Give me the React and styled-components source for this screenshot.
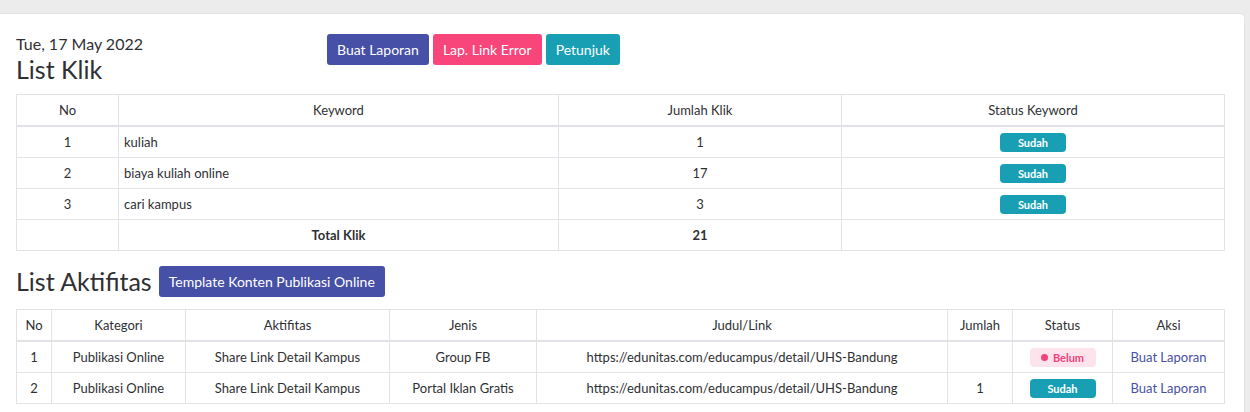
import React from 'react';
import styled, { createGlobalStyle } from 'styled-components';

const GlobalStyle = createGlobalStyle`
    body {
        margin: 0;
        background: #ececec;
        font-family: 'Lato', 'Noto Sans', sans-serif;
        color: #2f3033;
    }
`;

const Card = styled.div`
    margin: 13px 5px 0 0;
    background: #fff;
    border: 1px solid #e2e2e2;
    border-left: none;
    border-radius: 0 5px 0 0;
    padding: 18px 19px 9px 16px;
`;

const Header = styled.div`
    display: flex;
    align-items: flex-start;
`;

const TitleBlock = styled.div`
    width: 311px;
`;

const DateText = styled.div`
    font-size: 16px;
    line-height: 24px;
`;

const Title = styled.h2`
    margin: 0;
    font-size: 25px;
    font-weight: 400;
    line-height: 27px;
`;

const ButtonGroup = styled.div`
    display: flex;
    gap: 4px;
    margin-top: 2px;
`;

const colors = {
    primary: '#4650a6',
    danger: '#f8457a',
    info: '#199fb4',
};

const Button = styled.button`
    font-family: inherit;
    font-size: 14px;
    color: #fff;
    background: ${(p) => colors[p.$variant || 'primary']};
    border: none;
    border-radius: 3px;
    height: 31px;
    padding: 0 10px;
    cursor: pointer;
`;

const Table = styled.table`
    width: 100%;
    border-collapse: collapse;
    table-layout: fixed;
    font-size: 13px;
    margin-top: ${(p) => p.$mt || 0}px;

    th, td {
        border: 1px solid #e1e3e8;
        height: 30px;
        padding: 0 5px;
        text-align: center;
        font-weight: 400;
    }
    thead th {
        border-bottom: 2px solid #e1e3e8;
    }
`;

const LeftCell = styled.td`
    && {
        text-align: left;
    }
`;

const BoldCell = styled.td`
    && {
        font-weight: 700;
    }
`;

const SectionRow = styled.div`
    display: flex;
    align-items: center;
    gap: 7px;
    margin-top: 15px;
`;

const Badge = styled.span`
    display: inline-flex;
    align-items: center;
    justify-content: center;
    gap: 5px;
    width: 66px;
    height: 19px;
    border-radius: 4px;
    font-size: 11px;
    font-weight: 700;
    vertical-align: middle;
    background: ${(p) => (p.$done ? '#199fb4' : '#fde4ec')};
    color: ${(p) => (p.$done ? '#fff' : '#f0437a')};
`;

const Dot = styled.span`
    width: 7px;
    height: 7px;
    border-radius: 50%;
    background: #f0437a;
`;

const ActionLink = styled.a`
    color: #4650a6;
    text-decoration: none;
    font-size: 13px;
`;

const keywords = [
    { no: 1, keyword: 'kuliah', klik: 1 },
    { no: 2, keyword: 'biaya kuliah online', klik: 17 },
    { no: 3, keyword: 'cari kampus', klik: 3 },
];

const aktifitas = [
    { no: 1, jenis: 'Group FB', jumlah: '', done: false },
    { no: 2, jenis: 'Portal Iklan Gratis', jumlah: 1, done: true },
];

function App() {
    return (
        <>
            <GlobalStyle />
            <Card>
                <Header>
                    <TitleBlock>
                        <DateText>Tue, 17 May 2022</DateText>
                        <Title>List Klik</Title>
                    </TitleBlock>
                    <ButtonGroup>
                        <Button $variant='primary'>Buat Laporan</Button>
                        <Button $variant='danger'>Lap. Link Error</Button>
                        <Button $variant='info'>Petunjuk</Button>
                    </ButtonGroup>
                </Header>

                <Table $mt={11}>
                    <colgroup>
                        <col style={{ width: 102 }} />
                        <col style={{ width: 440 }} />
                        <col style={{ width: 283 }} />
                        <col />
                    </colgroup>
                    <thead>
                        <tr>
                            <th>No</th>
                            <th>Keyword</th>
                            <th>Jumlah Klik</th>
                            <th>Status Keyword</th>
                        </tr>
                    </thead>
                    <tbody>
                        {keywords.map((k) => (
                            <tr key={k.no}>
                                <td>{k.no}</td>
                                <LeftCell>{k.keyword}</LeftCell>
                                <td>{k.klik}</td>
                                <td>
                                    <Badge $done>Sudah</Badge>
                                </td>
                            </tr>
                        ))}
                        <tr>
                            <td></td>
                            <BoldCell>Total Klik</BoldCell>
                            <BoldCell>21</BoldCell>
                            <td></td>
                        </tr>
                    </tbody>
                </Table>

                <SectionRow>
                    <Title>List Aktifitas</Title>
                    <Button $variant='primary'>Template Konten Publikasi Online</Button>
                </SectionRow>

                <Table $mt={12}>
                    <colgroup>
                        <col style={{ width: 35 }} />
                        <col style={{ width: 134 }} />
                        <col style={{ width: 204 }} />
                        <col style={{ width: 147 }} />
                        <col style={{ width: 411 }} />
                        <col style={{ width: 65 }} />
                        <col style={{ width: 100 }} />
                        <col />
                    </colgroup>
                    <thead>
                        <tr>
                            <th>No</th>
                            <th>Kategori</th>
                            <th>Aktifitas</th>
                            <th>Jenis</th>
                            <th>Judul/Link</th>
                            <th>Jumlah</th>
                            <th>Status</th>
                            <th>Aksi</th>
                        </tr>
                    </thead>
                    <tbody>
                        {aktifitas.map((a) => (
                            <tr key={a.no}>
                                <td>{a.no}</td>
                                <td>Publikasi Online</td>
                                <td>Share Link Detail Kampus</td>
                                <td>{a.jenis}</td>
                                <td>https://edunitas.com/educampus/detail/UHS-Bandung</td>
                                <td>{a.jumlah}</td>
                                <td>
                                    {a.done ? (
                                        <Badge $done>Sudah</Badge>
                                    ) : (
                                        <Badge>
                                            <Dot />
                                            Belum
                                        </Badge>
                                    )}
                                </td>
                                <td>
                                    <ActionLink href='#'>Buat Laporan</ActionLink>
                                </td>
                            </tr>
                        ))}
                    </tbody>
                </Table>
            </Card>
        </>
    );
}

export default App;
